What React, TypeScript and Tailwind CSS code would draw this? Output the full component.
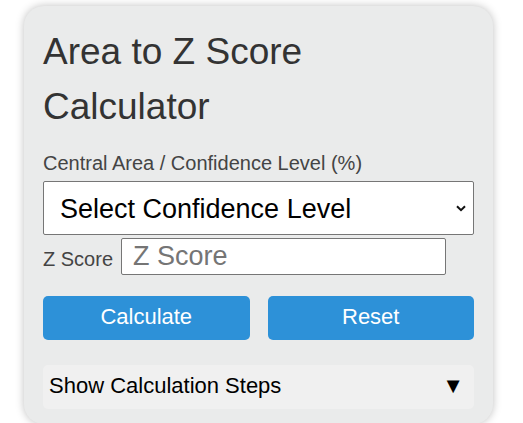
import React, { useState } from "react";

export default function App() {
  const [level, setLevel] = useState("");
  const [z, setZ] = useState("");

  return (
    <div className="min-h-screen bg-white pl-[24px] pt-[6px] font-['Liberation_Sans',Arial,sans-serif]">
      <div className="w-[469px] rounded-[20px] bg-[#eaebeb] px-[19px] pb-[15px] pt-[18px] shadow-[0_0_8px_rgba(0,0,0,0.25)]">
        <h1 className="m-0 text-[37px] font-normal leading-[55px] text-[#333]">
          Area to Z Score
          <br />
          Calculator
        </h1>

        <label className="mt-[18px] block text-[20px] leading-[23px] text-[#444]">
          Central Area / Confidence Level (%)
        </label>

        <div className="relative mt-[6px]">
          <select
            value={level}
            onChange={(e) => setLevel(e.target.value)}
            className="block h-[54px] w-full appearance-none rounded-[2px] border border-[#767676] bg-white pl-[16px] pt-[2px] text-[27px] text-black outline-none"
          >
            <option value="">Select Confidence Level</option>
            <option value="0.90">90%</option>
            <option value="0.95">95%</option>
            <option value="0.99">99%</option>
          </select>
          {/* chevron over the select */}
          <svg
            className="pointer-events-none absolute right-[8px] top-[24px]"
            width="10"
            height="7"
            viewBox="0 0 10 7"
          >
            <path d="M1 1.2 L5 5.2 L9 1.2" fill="none" stroke="#111" strokeWidth="2" />
          </svg>
        </div>

        <div className="mt-[3px] flex items-center">
          <span className="pt-[6px] text-[20px] leading-[23px] text-[#444]">Z Score</span>
          <input
            value={z}
            onChange={(e) => setZ(e.target.value)}
            placeholder="Z Score"
            className="ml-[8px] h-[37px] w-[325px] rounded-[2px] border border-[#767676] bg-white px-[11px] text-[27px] text-black outline-none placeholder:text-[#757575]"
          />
        </div>

        <div className="mt-[21px] grid grid-cols-2 gap-[18px]">
          <button className="h-[44px] rounded-[5px] bg-[#2d91d8] pb-[3px] text-[22px] text-white">
            Calculate
          </button>
          <button
            onClick={() => {
              setLevel("");
              setZ("");
            }}
            className="h-[44px] rounded-[5px] bg-[#2d91d8] pb-[3px] text-[22px] text-white"
          >
            Reset
          </button>
        </div>

        <div className="mt-[25px] flex h-[44px] items-center justify-between rounded-[5px] bg-[#f0f0f0] pb-[3px] pl-[6px] pr-[10px] text-[22px] text-black">
          <span>Show Calculation Steps</span>
          <span>▼</span>
        </div>
      </div>
    </div>
  );
}
